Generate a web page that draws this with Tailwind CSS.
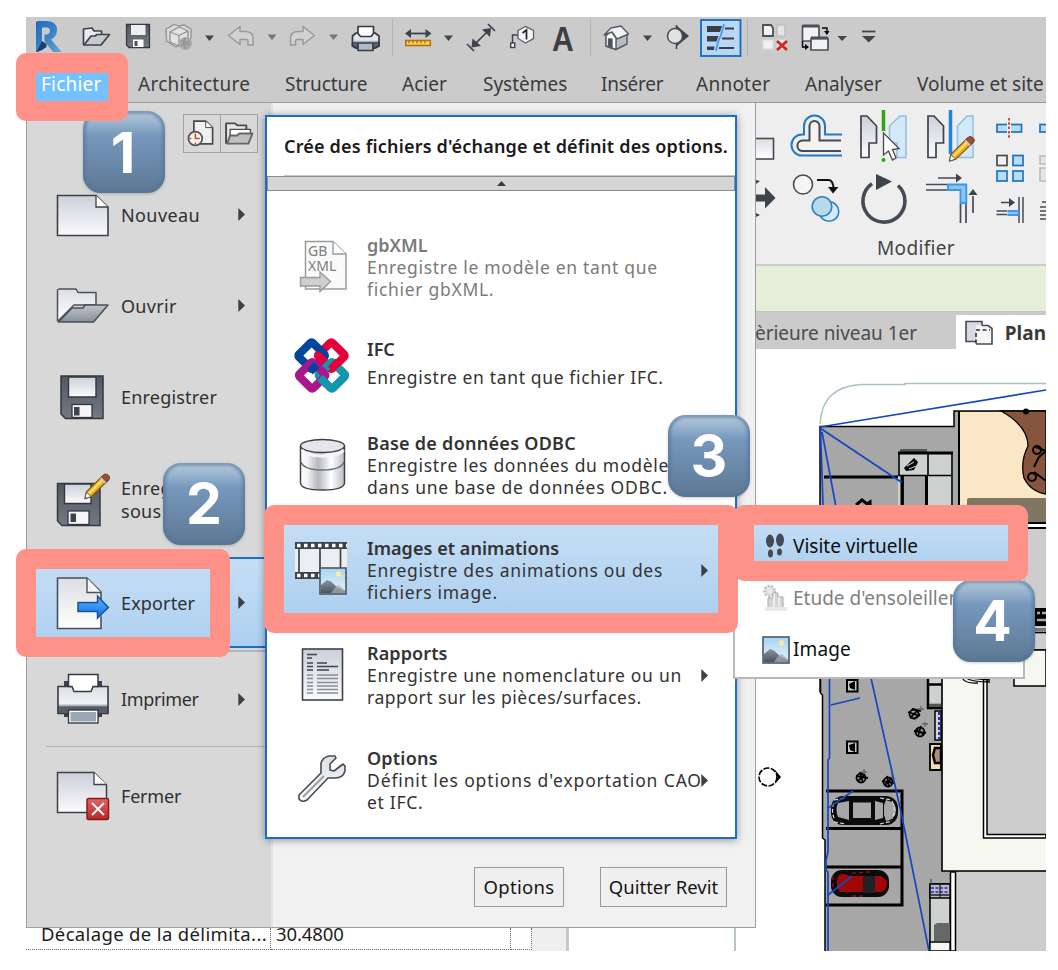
<!DOCTYPE html>
<html lang="fr">
<head>
<meta charset="utf-8">
<title>Revit – Exporter une visite virtuelle</title>
<script src="https://cdn.jsdelivr.net/npm/@tailwindcss/browser@4"></script>
</head>
<body class="relative h-[970px] w-[1058px] overflow-hidden bg-white font-['Noto_Sans',sans-serif] text-[#3b3b3b]">

<!-- shared gradients and symbols -->
<svg class="absolute size-0" aria-hidden="true">
  <defs>
    <linearGradient id="gray" x1="0" y1="0" x2="0" y2="1"><stop offset="0" stop-color="#ccd0da"/><stop offset="1" stop-color="#fbfbfc"/></linearGradient>
    <linearGradient id="paper" x1="0" y1="0" x2="0" y2="1"><stop offset="0" stop-color="#dcdee2"/><stop offset="1" stop-color="#ffffff"/></linearGradient>
    <linearGradient id="dark" x1="0" y1="0" x2="0" y2="1"><stop offset="0" stop-color="#525963"/><stop offset="1" stop-color="#737983"/></linearGradient>
    <linearGradient id="flap" x1="0" y1="0" x2="0" y2="1"><stop offset="0" stop-color="#c0c5cc"/><stop offset="1" stop-color="#87909b"/></linearGradient>
    <linearGradient id="cyl" x1="0" y1="0" x2="1" y2="0"><stop offset="0" stop-color="#fff"/><stop offset=".15" stop-color="#f4f4f5"/><stop offset=".4" stop-color="#b5b8be"/><stop offset=".7" stop-color="#fff"/><stop offset="1" stop-color="#b9bcc2"/></linearGradient>
    <linearGradient id="bluearrow" x1="0" y1="0" x2="0" y2="1"><stop offset="0" stop-color="#5db2ff"/><stop offset="1" stop-color="#0a72e8"/></linearGradient>
    <linearGradient id="sky" x1="0" y1="0" x2="0" y2="1"><stop offset="0" stop-color="#a5d4f0"/><stop offset="1" stop-color="#e9f5fb"/></linearGradient>
    <linearGradient id="hill" x1="0" y1="0" x2="0" y2="1"><stop offset="0" stop-color="#8b94a0"/><stop offset="1" stop-color="#4a5361"/></linearGradient>
    <linearGradient id="rl" x1="0" y1="0" x2="1" y2="1"><stop offset="0" stop-color="#1d6cc0"/><stop offset=".5" stop-color="#3a82c8"/><stop offset="1" stop-color="#6aa6cc"/></linearGradient>
    <linearGradient id="redx" x1="0" y1="0" x2="0" y2="1"><stop offset="0" stop-color="#e06464"/><stop offset="1" stop-color="#b82727"/></linearGradient>
    <symbol id="arrow" viewBox="0 0 7 13"><path d="M.3 0L7 6.500L.3 13Z" fill="#3f4043"/></symbol>
    <symbol id="picture" viewBox="0 0 28 28">
      <rect x="1" y="1" width="26" height="26" fill="url(#sky)" stroke="#4d5661" stroke-width="1.6"/>
      <rect x="17" y="4.500" width="5" height="5" rx="1" fill="#fbe7a0"/>
      <path d="M2 18L8 13L12 14.500L18 20L26 24V26.200H2Z" fill="url(#hill)"/>
      <path d="M12 26L17 19L20 18L26 23V26Z" fill="#a9aeb6" opacity=".7"/>
    </symbol>
    <symbol id="pencil" viewBox="0 0 28 28">
      <path d="M1 27L2.500 20L20 3L25 8L7.500 25Z" fill="#f0b21a" stroke="#8a5a12" stroke-width="1.300"/>
      <path d="M5 22L21 6" stroke="#ffe07a" stroke-width="2.200"/>
      <path d="M1 27L2.500 20.500L7.500 25Z" fill="#fff" stroke="#555" stroke-width="1"/>
      <path d="M17.500 5.500L22.500 10.500L26.800 6.500Q27 2 21.500 1.500Z" fill="#9a5230" stroke="#5e3a28" stroke-width="1"/>
      <path d="M16.500 6.500L21.500 11.500L23 10L18 5Z" fill="#c8c8c8"/>
    </symbol>
  </defs>
</svg>

<div class="ml-[26px] mt-[17px] flex h-[934px] w-[1020px] flex-col overflow-hidden">

  <!-- quick access toolbar -->
  <div class="flex h-10 bg-[#cbcbcb]">
    <svg class="h-10 w-[46px]" viewBox="26 17 46 40">
      <path d="M36 22L40 21V51L36 52Z" fill="#2b5a90"/><path d="M37 21H47Q57.500 21.500 57 30.500Q56.500 37.500 51 39.500L61.500 52H53L44.500 41V34.500H47Q50 33.500 50 30.500Q49.500 27.500 46.500 27.500H42V47L36 52V33Z" fill="url(#rl)"/><path d="M42 41L46.500 44V47Q42 51 36.500 52Z" fill="#1d3f68"/>
    </svg>
    <svg class="h-10 w-[46px]" viewBox="72 17 46 40" stroke="#3d434c" stroke-width="1.700" stroke-linejoin="round">
      <path d="M83.500 45V29L92 28L94 31H101.500V35" fill="#e9eaee"/><path d="M84 45L91 36H95L97 34.500H109.500L101 45Z" fill="#c5c9d0"/>
    </svg>
    <svg class="h-10 w-10" viewBox="118 17 40 40">
      <path d="M126.500 24.500H149.500V47.500H129L126.500 45Z" fill="url(#dark)" stroke="#353b45" stroke-width="1.300"/><rect x="131" y="25" width="14.500" height="10" fill="#eceef1"/><rect x="133" y="39.500" width="10.500" height="7.500" fill="#fff"/><rect x="134.500" y="41" width="3" height="5" fill="#4a505a"/>
    </svg>
    <svg class="h-10 w-[62px]" viewBox="158 17 62 40">
      <g fill="#d9d9d9" stroke="#929292" stroke-width="1.300" stroke-linejoin="round"><path d="M166 29L174 24.500L179 26L184 25L191 29V38L186 43L176 47L166.500 41Z"/><path d="M170 32L179 27L188 31V41L179 46L170 42Z" fill="#e2e2e2"/><path d="M170 32L179 35.500L188 31M179 35.500V46" fill="none"/></g>
      <circle cx="185.500" cy="43.500" r="6.500" fill="#a9a9a9"/><path d="M181 40q5 4 9 1M181 46q4-4 9-1M185 38q-3 6 1 11" stroke="#8a8a8a" fill="none"/>
      <path d="M205 35.500H214L209.500 41Z" fill="#444"/>
    </svg>
    <svg class="h-10 w-[62px]" viewBox="220 17 62 40">
      <path d="M228.500 35.500L240 26.500V31.500H246Q253 32 253 38V45H248V41Q248 39.500 246 39.500H240V44.500Z" fill="#d2d2d2" stroke="#9a9a9a" stroke-width="1.500" stroke-linejoin="round"/><path d="M267.500 34.500H276.500L272 40Z" fill="#777"/>
    </svg>
    <svg class="h-10 w-[62px]" viewBox="282 17 62 40">
      <path d="M314.500 35.500L303 26.500V31.500H297Q290.500 32 290.500 38V45H295.500V41Q295.500 39.500 297 39.500H303V44.500Z" fill="#d2d2d2" stroke="#9a9a9a" stroke-width="1.500" stroke-linejoin="round"/><path d="M329 34.500H338L333.500 40Z" fill="#777"/>
    </svg>
    <svg class="h-10 w-12" viewBox="344 17 48 40" stroke="#353b45" stroke-width="1.700" stroke-linejoin="round">
      <path d="M352.500 36L356 33H375L379 36V46L375 48H356L352.500 46Z" fill="#e4e6e9"/><path d="M352.500 42.500H379V46L375 48H356L352.500 46Z" fill="#5a626d"/><path d="M358 26.500H373.500V33.500L371 36.500H360.500L358 33.500Z" fill="#fff"/><rect x="358" y="43" width="15" height="7.500" fill="#a9bcc8"/><path d="M353.500 41.500H378" stroke="#aeb3ba" stroke-width="1.500"/>
    </svg>
    <svg class="h-10 w-[68px]" viewBox="392 17 68 40">
      <path d="M392.500 19V56" stroke="#b4b4b4"/><path d="M407 33.500H430" stroke="#3d434c" stroke-width="1.800"/><path d="M405 33.500L411 29V38ZM431.500 33.500L425.500 29V38Z" fill="#3d434c"/><rect x="405.800" y="40.500" width="24.500" height="5" fill="#ffd55c" stroke="#b87000" stroke-width="1.600"/><path d="M409 41v2.500M413 41v2.500M417 41v2.500M421 41v2.500M425 41v2.500" stroke="#8a5600"/><path d="M444 35.500H453L448.500 41Z" fill="#444"/>
    </svg>
    <svg class="h-10 w-[42px]" viewBox="460 17 42 40" stroke="#3d434c" stroke-width="1.700">
      <path d="M474 45L489 30M467 44L474 51M488 24L495 31"/><path d="M471.500 47.500L472.500 38.500L481 46ZM491 28L490 37L482 29.500Z" fill="#3d434c" stroke="none"/>
    </svg>
    <svg class="h-10 w-10" viewBox="502 17 40 40">
      <path d="M512.500 43V35H518" stroke="#3d434c" stroke-width="1.500" fill="none"/><rect x="510.700" y="43" width="4" height="4.500" fill="#fff" stroke="#3d434c" stroke-width="1.400"/><path d="M518 30.500L525.500 26.500L533.500 30.500V38.500L525.500 43L518 38.500Z" fill="#f4f4f5" stroke="#5b6069" stroke-width="1.300"/><path d="M522.500 33L526.500 30V39.500" stroke="#222" stroke-width="1.700" fill="none"/>
    </svg>
    <div class="flex w-12 items-center justify-start pl-[10px] pt-[2px] font-['Liberation_Sans',sans-serif] text-[35px] font-bold leading-none text-[#3d3f42]"><span class="inline-block origin-left scale-x-[0.86]">A</span></div>
    <svg class="h-10 w-[68px]" viewBox="590 17 68 40">
      <path d="M590.500 19V56" stroke="#b4b4b4"/><g stroke="#555b65" stroke-width="1.400" stroke-linejoin="round"><path d="M606 36V46L616 49.500L627 44V34L616 30Z" fill="#b5bcc8"/><path d="M606 36L611 31L616 38V49.500L606 46Z" fill="#fff"/><path d="M604 35L611 28L621 26L628.500 34L617 39L612 32Z" fill="#f1f2f4"/><path d="M608.500 39V47L612 48V39Z" fill="#4a5058"/></g><path d="M643 35.500H652L647.500 41Z" fill="#444"/>
    </svg>
    <svg class="h-10 w-[41px]" viewBox="658 17 41 40">
      <path d="M677 26L689 36L677 46Z" fill="#3d434c"/><path d="M676.500 25V49" stroke="#3d434c" stroke-width="1.500"/><circle cx="675" cy="36" r="7.500" fill="#e2e2e4" stroke="#4a5059" stroke-width="1.500"/>
    </svg>
    <svg class="h-10 w-12" viewBox="699 17 48 40">
      <rect x="701" y="20" width="39.500" height="36" fill="#b9d7f3" stroke="#1168c4" stroke-width="1.800"/><path d="M707 26H722L720 32H707ZM707 36H718.500L716.500 41.500H707ZM707 46.500H714.500L714 50H707Z" fill="#3a3f47"/><path d="M725 28.500H734M722 38.500H734M719 48H734" stroke="#3a3f47" stroke-width="1.800"/><path d="M724 24L722.500 30L720.500 36L718 42L716 51" stroke="#3f9bff" stroke-width="1.800" fill="none"/>
    </svg>
    <svg class="h-10 w-[47px]" viewBox="747 17 47 40">
      <path d="M747.500 19V56" stroke="#b4b4b4"/><path d="M763 25H771L773 28V36H763Z" fill="#f2f2f3" stroke="#4a505a" stroke-width="1.800"/><g fill="#e3e4e6" stroke="#b5b8be" stroke-width="1.200"><path d="M777 25H785V36H777Z"/><path d="M763 40H773V49H763Z" fill="#f0f0f1" stroke="#dcdcde"/><path d="M777 40H785V49H777Z" fill="#f0f0f1" stroke="#dcdcde"/></g><path d="M777 41L787 50M787 41L777 50" stroke="#cf2a20" stroke-width="3"/>
    </svg>
    <svg class="h-10 w-[58px]" viewBox="794 17 58 40">
      <g fill="#f2f2f3" stroke="#4a505a" stroke-width="1.700"><path d="M802.500 26H819V41H802.500Z"/><path d="M802.500 26H819" stroke-width="3"/><path d="M811 38.500H828V50H811Z"/><path d="M811 38H828" stroke-width="3"/></g><path d="M822 28H827V34M802.500 41V47H807" stroke="#000" stroke-width="1.400" fill="none"/><path d="M824 31H829.500L827 35ZM805 44V50L809 47Z"/><path d="M837.500 36H847L842 41Z" fill="#444"/>
    </svg>
    <svg class="h-10 w-8" viewBox="852 17 32 40"><path d="M862 31.500H875.500" stroke="#444" stroke-width="1.800"/><path d="M862 36H875.500L868.700 42.500Z" fill="#444"/></svg>
  </div>

  <!-- ribbon tabs -->
  <div class="flex h-[46px] items-start border-b border-[#9c9c9c] bg-[#cbcbcb] pl-[10px] pt-[13px] text-[19px] leading-7 whitespace-nowrap">
    <span class="mr-[30px] h-8 w-[72px] bg-[#73c2ff] pl-[5px] text-white tracking-[0.2px]">Fichier</span>
    <span class="w-[147px] tracking-[0.28px]">Architecture</span>
    <span class="w-[117px] tracking-[-0.05px]">Structure</span>
    <span class="w-[81px]">Acier</span>
    <span class="w-[118px]">Systèmes</span>
    <span class="w-[95px] tracking-[-0.25px]">Insérer</span>
    <span class="w-[109px] tracking-[0.25px]">Annoter</span>
    <span class="w-[112px] tracking-[0.02px]">Analyser</span>
    <span>Volume et site</span>
  </div>

  <div class="flex grow">
    <!-- left side: application menu over the properties palette -->
    <div class="flex w-[730px] flex-col">
      <div class="relative flex h-[825px] border-b-[1.500px] border-l-[1.500px] border-r-[1.500px] border-[#9d9f9e] bg-[#f1f1f1]">
        <div class="flex w-[246px] flex-col border-r-2 border-[#e6e6e6] bg-[#d8d8d8] text-[18px] text-[#303030] leading-[22px] tracking-[0.3px]">
          <div class="flex h-[66px] pl-[156px] pt-[11px]">
            <div class="flex h-[39px] w-[75px] border-[1.500px] border-[#a2a2a2]">
              <svg class="h-full w-1/2 border-r border-[#a2a2a2]" viewBox="184 117 36 36"><path d="M194 122.500H206L213 129V145.500H194Z" fill="#f0f0f1" stroke="#4a4a4a" stroke-width="1.700"/><path d="M206 122.500V129H213" fill="#fff" stroke="#4a4a4a"/><circle cx="195.500" cy="140" r="7" fill="#f5f5f5" stroke="#555" stroke-width="1.800"/><path d="M195.500 135V140H200M189.500 140H191.500M195.500 146V144" stroke="#e0431c" stroke-width="1.500" fill="none"/></svg>
              <svg class="h-full w-1/2" viewBox="220 117 36 36"><g stroke="#4a4a4a" stroke-width="1.900" stroke-linejoin="round"><path d="M225 145V125H234L236 127H245V133" fill="#e6e6e6"/><path d="M229 131H249V138H229Z" fill="#fff" stroke-width="1.300"/><path d="M226 145L229 137H236L238 135H251L247 145Z" fill="#bfbfbf" stroke="#666"/></g></svg>
            </div>
          </div>
          <div class="flex h-[91px] items-center pl-[29px]">
            <svg class="mr-[11px] h-[44px] w-[54px]" viewBox="56 193 54 44"><path d="M57.500 195.500H96L108 207V235.500H57.500Z" fill="url(#gray)" stroke="#3d4046" stroke-width="1.600"/><path d="M96 195.500V207H108" fill="#fff" stroke="#3d4046" stroke-width="1.300"/></svg>
            <span class="w-[117px] tracking-[0.4px]">Nouveau</span><svg class="h-[13px] w-[7px]"><use href="#arrow"/></svg>
          </div>
          <div class="flex h-[91px] items-center pl-[29px]">
            <svg class="mr-[11px] h-[44px] w-[54px]" viewBox="56 285 54 44"><g stroke="#4a505a" stroke-width="1.500" stroke-linejoin="round"><path d="M57.500 322V291L59 290H76L78 293.500H96V306H74L58 322Z" fill="url(#paper)"/><path d="M58.500 323L72 309H83L85 306H108L93.500 323Z" fill="url(#flap)"/></g></svg>
            <span class="w-[117px]">Ouvrir</span><svg class="h-[13px] w-[7px]"><use href="#arrow"/></svg>
          </div>
          <div class="flex h-[92px] items-center pl-[29px]">
            <svg class="mr-[11px] h-[46px] w-[54px]" viewBox="56 374 54 46"><path d="M61 376H103V418.500H65.500L61 414Z" fill="url(#dark)" stroke="#33383f" stroke-width="1.500"/><path d="M68.500 377H96V397H68.500Z" fill="url(#gray)" stroke="#33383f" stroke-width="1.400"/><rect x="72" y="404.500" width="20" height="13" fill="#f5f5f6" stroke="#33383f" stroke-width="1.300"/><rect x="74" y="407" width="5.500" height="8.500" fill="#3d434c"/></svg>
            <span class="tracking-[0.2px]">Enregistrer</span>
          </div>
          <div class="flex h-[114px] items-center pl-[29px]">
            <svg class="mr-[11px] h-[56px] w-[54px]" viewBox="56 470 54 56"><path d="M57.500 481.500H100V523.500H62L57.500 519Z" fill="url(#dark)" stroke="#33383f" stroke-width="1.500"/><path d="M64.500 482H91V501.500H64.500Z" fill="url(#gray)" stroke="#33383f" stroke-width="1.400"/><rect x="68" y="509" width="21" height="13.500" fill="#f5f5f6" stroke="#33383f" stroke-width="1.300"/><rect x="70.500" y="511.500" width="5.500" height="8.500" fill="#3d434c"/><use href="#pencil" x="84" y="470" width="27" height="28"/></svg>
            <span class="leading-[23px]">Enregistrer<br>sous</span>
          </div>
          <div class="flex h-[91px] items-center border-y-2 border-[#1b6ec4] bg-linear-to-b from-[#c6def5] to-[#add0f0] pl-[29px]">
            <svg class="mr-[11px] h-[56px] w-[54px]" viewBox="56 573 54 56"><path d="M57.500 576H87L101 590V626.500H57.500Z" fill="url(#paper)" stroke="#4a505a" stroke-width="1.600"/><path d="M87 576V590.500H101" fill="#f6f6f6" stroke="#4a505a" stroke-width="1.400"/><path d="M76 599H96V592L110 605.500L96 619V611H76Z" fill="#fff" opacity=".6"/><path d="M78 600.500H97.500V594L108.500 605.500L97.500 616V609.500H78Z" fill="url(#bluearrow)" stroke="#174f8c" stroke-width="1.500"/></svg>
            <span class="w-[117px] tracking-[0.15px]">Exporter</span><svg class="h-[13px] w-[7px]"><use href="#arrow"/></svg>
          </div>
          <div class="ml-[19px] mt-[2px] h-[1.500px] bg-[#b5b5b5]"></div>
          <div class="flex h-[94px] items-center pl-[29px] pt-px">
            <svg class="mr-[11px] h-[54px] w-[54px]" viewBox="56 672 54 54"><path d="M64 688V681H102V688ZM64 710H102V717H64Z" fill="#3a4048"/><path d="M58 686.500H108V713.500H58Z" fill="url(#paper)" stroke="#353b45" stroke-width="1.600"/><path d="M58 706.500H108V713.500H58Z" fill="#555e69" stroke="#353b45"/><path d="M68.500 674.500H98V686.500H93L91 691.500H74L72 686.500H68.500Z" fill="#fff" stroke="#353b45" stroke-width="1.500"/><path d="M59 705.500H107" stroke="#aeb3ba" stroke-width="2"/><rect x="69.500" y="711" width="27.500" height="11.500" fill="#9aa9b5" stroke="#fff" stroke-width="2"/><rect x="68.500" y="710" width="29.500" height="13" fill="none" stroke="#353b45" stroke-width="1.400"/></svg>
            <span class="w-[117px] tracking-[-0.35px]">Imprimer</span><svg class="h-[13px] w-[7px]"><use href="#arrow"/></svg>
          </div>
          <div class="ml-[19px] h-[1.500px] bg-[#b5b5b5]"></div>
          <div class="flex h-[97px] items-center pl-[29px]">
            <svg class="mr-[11px] h-[52px] w-[54px]" viewBox="56 770 54 52"><path d="M57.500 772.500H94L106.500 785V812.500H57.500Z" fill="url(#gray)" stroke="#3d4046" stroke-width="1.500"/><path d="M94 772.500V784.500H106.500" fill="#fff" stroke="#3d4046" stroke-width="1.300"/><rect x="87" y="798.500" width="21.500" height="21" rx="1.500" fill="url(#redx)" stroke="#8d1a1a" stroke-width="1.500"/><path d="M92 803L104 815M104 803L92 815" stroke="#fff" stroke-width="1.800"/></svg>
            <span class="tracking-[-0.2px]">Fermer</span>
          </div>
        </div>

        <!-- footer buttons -->
        <div class="flex grow items-end justify-end gap-[36px] pb-[20px] pr-[28px] text-[18.500px] text-[#151515]">
          <div class="flex h-[40px] w-[90px] items-center justify-center border-[1.500px] border-[#9a9a9a] bg-[#efefef] pb-[2px] pt-[2px] tracking-[0.3px]">Options</div>
          <div class="flex h-[40px] w-[127px] items-center justify-center border-[1.500px] border-[#9a9a9a] bg-[#efefef] pb-[2px] pt-[2px] whitespace-nowrap">Quitter Revit</div>
        </div>

        <!-- export list panel -->
        <div class="absolute left-[238px] top-[12px] flex h-[724px] w-[472px] flex-col border-2 border-[#1b6ec4] bg-white shadow-[0_1px_8px_rgba(0,0,0,0.4)]">
          <div class="ml-[17px] flex h-[59px] items-center border-b border-[#c4c4c4] text-[18px] font-semibold tracking-[0.18px] text-[#1a1a1a] whitespace-nowrap">Crée des fichiers d'échange et définit des options.</div>
          <div class="flex h-[15px] items-center justify-center border-[1.500px] border-[#8c8c8c] bg-[#d6d6d6]"><svg class="h-[5px] w-[9px]" viewBox="0 0 9 5"><path d="M0 5L4.500 0L9 5Z" fill="#3a3a3a"/></svg></div>
          <div class="mt-[23.500px] flex flex-col text-[17.500px] leading-[22.300px] tracking-[0.7px] text-[#333] whitespace-nowrap">
            <div class="flex h-[105px] items-center pl-[26px] text-[#7b7b7b]">
              <svg class="mr-[19px] h-[56px] w-[55px]" viewBox="293 239 55 56"><path d="M305.500 241.500H333L346 254V289H305.500Z" fill="#fafafa" stroke="#9b9b9b" stroke-width="1.500"/><path d="M333 241.500V254H346" fill="#fff" stroke="#9b9b9b" stroke-width="1.400"/><text x="308" y="256" class="tracking-[0px]" font-size="14" fill="#7d7d7d">GB</text><text x="308" y="270.500" class="tracking-[0px]" font-size="14" fill="#7d7d7d">XML</text><path d="M300.500 277.500H320V272L330.500 281.500L320 291.500V286H300.500Z" fill="#cfcfcf" stroke="#9b9b9b" stroke-width="1.400"/></svg>
              <div><div class="text-[18px] font-semibold tracking-normal">gbXML</div>Enregistre le modèle en tant que<br>fichier gbXML.</div>
            </div>
            <div class="flex h-[93px] items-center pl-[26px]">
              <svg class="mb-[2px] mr-[17px] h-[57px] w-[57px]" viewBox="295.500 339 52 52" fill="none" stroke-width="7.400" stroke-linejoin="round">
                <rect x="-9" y="-9" width="18" height="18" rx="1.500" transform="translate(330.500 356) rotate(45)" stroke="#e4003c"/>
                <rect x="-9" y="-9" width="18" height="18" rx="1.500" transform="translate(312.500 356) rotate(45)" stroke="#00479b"/>
                <path d="M318.500 356L325 362.500" stroke="#e4003c" stroke-linecap="round"/>
                <rect x="-9" y="-9" width="18" height="18" rx="1.500" transform="translate(331 374) rotate(45)" stroke="#1397ad"/>
                <rect x="-9" y="-9" width="18" height="18" rx="1.500" transform="translate(313 374) rotate(45)" stroke="#a9178a"/>
                <path d="M326 382L320 376" stroke="#1397ad"/>
                <path d="M317 364.500L311 370.500" stroke="#00479b"/>
                <path d="M330 368.500L337 361.500" stroke="#e4003c"/>
              </svg>
              <div class="relative -top-[3px]"><div class="mb-[5px] text-[18px] font-semibold tracking-normal">IFC</div><span class="tracking-[0.64px]">Enregistre en tant que fichier IFC.</span></div>
            </div>
            <div class="flex h-[105px] items-center pl-[26px]">
              <svg class="mr-[19px] h-[56px] w-[55px]" viewBox="293 437 55 56"><path d="M300.500 447V483Q301 490 322.500 490Q344 490 344.500 483V447Z" fill="url(#cyl)" stroke="#3d4046" stroke-width="1.500"/><ellipse cx="322.500" cy="446" rx="22" ry="6.500" fill="#e5e6e9" stroke="#3d4046" stroke-width="1.500"/><path d="M302 450Q306 456 322 456Q339 456 343.500 450" stroke="#f6f6f7" stroke-width="3" fill="none"/><path d="M301 462Q304 470 322.500 470Q341 470 344 462" fill="none" stroke="#6a6e76" stroke-width="1.500"/></svg>
              <div><div class="text-[18px] font-semibold tracking-[0.27px]">Base de données ODBC</div>Enregistre les données du modèle<br><span class="tracking-[0.76px]">dans une base de données ODBC.</span></div>
            </div>
            <div class="flex h-[105px] items-center bg-linear-to-b from-[#c6def5] to-[#abcfef] pl-[26px]">
              <svg class="mr-[19px] h-[58px] w-[55px]" viewBox="293 541 55 58"><path d="M295 542H347V579H295Z" fill="#3c434d"/><path d="M295 549H347V572H295Z" fill="#eceef2"/><path d="M299 549V572M320 549V572M340.500 549V572" stroke="#3c434d" stroke-width="1.700"/><path d="M297 545.500H347M297 575.500H347" stroke="#fff" stroke-width="3.500" stroke-dasharray="3.500 3.500"/><use href="#picture" x="319" y="567" width="28" height="28"/></svg>
              <div class="w-[334px]"><div class="text-[18px] font-semibold tracking-[0.05px]">Images et animations</div>Enregistre des animations ou des<br>fichiers image.</div><svg class="h-[13px] w-[7px]"><use href="#arrow"/></svg>
            </div>
            <div class="flex h-[105px] items-center pl-[26px]">
              <svg class="mr-[19px] h-[56px] w-[55px]" viewBox="293 646 55 56"><rect x="302.500" y="648" width="40" height="51" fill="url(#gray)" stroke="#3d434c" stroke-width="1.600"/><path d="M307 653.500H317M307 657H312M307 662H313M317 662H327M307 665.500H313M317 665.500H338M307 669H313M317 669H329" stroke="#3d434c" stroke-width="1.500"/><path d="M307 674H313M317 674H338M307 677.500H313M317 677.500H338M307 681.500H313M317 681.500H338M307 685H313M317 685H338M307 688.500H313M317 688.500H338M307 692H313M317 692H338" stroke="#888d96" stroke-width="1.300"/></svg>
              <div class="w-[334px]"><div class="text-[18px] font-semibold tracking-[0.1px]">Rapports</div>Enregistre une nomenclature ou un<br><span class="tracking-[0.55px]">rapport sur les pièces/surfaces.</span></div><svg class="h-[13px] w-[7px]"><use href="#arrow"/></svg>
            </div>
            <div class="flex h-[105px] items-center pl-[26px]">
              <svg class="mr-[19px] h-[56px] w-[55px]" viewBox="293 751 55 56"><path d="M299 794L321 772V762Q323 756 329 755H335L336 757L330 763V769L334 770L343 763L345 765V770Q343 777 335 777H328L307 799Q302 802 299 798Z" fill="url(#paper)" stroke="#454b55" stroke-width="1.600" stroke-linejoin="round"/><path d="M303 796L324 775" stroke="#9aa0aa" stroke-width="2"/></svg>
              <div class="w-[334px]"><div class="text-[18px] font-semibold tracking-[0.2px]">Options</div><span class="tracking-[0.87px]">Définit les options d'exportation CAO</span><br>et IFC.</div><svg class="h-[13px] w-[7px]"><use href="#arrow"/></svg>
            </div>
          </div>
        </div>
      </div>

      <!-- properties palette row -->
      <div class="flex h-[23px] overflow-hidden text-[18.500px] leading-[11px] text-[#1c1c1c] whitespace-nowrap">
        <div class="flex h-[22px] w-[245px] border-b border-r border-dotted border-[#666] pl-[15px] tracking-[0.35px]">Décalage de la délimita...</div>
        <div class="h-[22px] w-[240px] border-b border-r border-dotted border-[#666] pl-[5px] tracking-[-0.1px]">30.4800</div>
        <div class="h-[22px] w-[21px] border-b border-r border-dotted border-[#666]"></div>
        <div class="w-[34px] bg-[#efefef]"></div>
        <div class="w-[3px] bg-[#c9c9c9]"></div>
        <div class="ml-[165px] w-[2px] bg-[#b3c9bf]"></div>
      </div>
    </div>

    <!-- right side: ribbon, option bar, view tabs, plan -->
    <div class="flex w-[290px] flex-col">
      <div class="flex h-[163px] flex-col border-b-2 border-[#cbcbcb] bg-[#eeeeee]">
        <div class="grid h-[129px] grid-cols-[29px_63px_66px_72px_60px] grid-rows-[66px_63px]">
          <svg class="h-[66px] w-[29px]" viewBox="756 103 29 66"><rect x="740" y="138.500" width="33.500" height="20.500" fill="url(#paper)" stroke="#454b55" stroke-width="1.600"/></svg>
          <svg class="h-[66px] w-[63px]" viewBox="785 103 63 66" fill="none"><path d="M842 134.500H825V126A10.500 10.500 0 0 0 804 126V134.500H802A10.300 10.300 0 0 0 802 155.500H842" stroke="#2379c7" stroke-width="2"/><path d="M841 140.500H819.500V126A5 5 0 0 0 809.500 126V140.500H802A5.300 5.300 0 0 0 802 151H841" stroke="#454b55" stroke-width="2" fill="#f3f3f4"/></svg>
          <svg class="h-[66px] w-[66px]" viewBox="848 103 66 66"><path d="M861 116H867L876.500 126V143H869V157.500H861Z" fill="url(#gray)" stroke="#3d434c" stroke-width="1.700"/><path d="M906 116H900L889.500 126V143H897V157.500H906Z" fill="#d3e9f5" stroke="#8fc0e2" stroke-width="1.500"/><path d="M883.500 110V131" stroke="#36a01c" stroke-width="3.500"/><circle cx="883.500" cy="160" r="2" fill="#36a01c"/><path d="M883.500 133V155L888.500 151L892.500 160L896 158L892.500 149.500L899 148.500Z" fill="#fff" stroke="#4a4a4a" stroke-width="1.300"/></svg>
          <svg class="h-[66px] w-[72px]" viewBox="914 103 72 66"><path d="M928 116H934L943.500 126V143H936V157.500H928Z" fill="url(#gray)" stroke="#3d434c" stroke-width="1.700"/><path d="M973 116H967L957.500 126V157.500H973Z" fill="#d3e9f5" stroke="#8fc0e2" stroke-width="1.500"/><path d="M950.500 110V154" stroke="#1e83e8" stroke-width="3.500"/><use href="#pencil" x="948.500" y="135" width="27" height="27"/></svg>
          <svg class="row-span-2 h-[129px] w-[60px]" viewBox="986 103 60 129"><g stroke="#1b74bb" stroke-width="1.700" fill="#b9dcf0"><rect x="997" y="124.500" width="24.500" height="7.500"/><rect x="1040" y="124.500" width="12" height="7.500"/><rect x="1013" y="155.500" width="10" height="10"/><rect x="997" y="171" width="10" height="10"/><rect x="1013" y="171" width="10" height="10"/></g><path d="M1009 118V138" stroke="#eee" stroke-width="4"/><path d="M1009 118V138" stroke="#cf3a2c" stroke-width="1.800" stroke-dasharray="2.500 1.800"/><rect x="997" y="155.500" width="10" height="10" fill="#f0f0f1" stroke="#454b55" stroke-width="1.700"/><path d="M1040 156H1050V164H1040ZM1040 168H1050V181H1040Z" fill="#e4e4e4" stroke="#b9b9b9" stroke-width="1.500"/><path d="M1001 202.500H1010M996.500 211H1007M996.500 214.500H1007M1019 197V223M1023 197V223" stroke="#454b55" stroke-width="1.500"/><path d="M1009 198L1015 202.500L1009 207Z" fill="#3d434c"/><path d="M1007.500 211H1018.500V215H1007.500" stroke="#3f97ec" stroke-width="1.800" fill="#8cc4f7"/><path d="M1040 207H1046M1040 211H1046M1040 215H1046M1040 219H1046M1042 202H1046" stroke="#454b55" stroke-width="1.500"/></svg>
          <svg class="h-[63px] w-[29px]" viewBox="756 169 29 63"><path d="M756 194.500H765V187L775.500 198L765 208.500V201.500H756Z" fill="#3d434c"/><path d="M756 180L760 181L756 184ZM756 213L760 215L756 217Z" fill="#3d434c"/></svg>
          <svg class="h-[63px] w-[63px]" viewBox="785 169 63 63"><circle cx="803" cy="184.500" r="9.500" fill="#f5f5f6" stroke="#454b55" stroke-width="1.600"/><path d="M817 180H829Q833.500 181 833.500 189" stroke="#111" stroke-width="2" fill="none"/><path d="M828 187H838.500L833 193.500Z" fill="#111"/><circle cx="829" cy="211.500" r="9.800" fill="#d5eaf6" stroke="#2e82c5" stroke-width="1.600"/><circle cx="822" cy="206.500" r="9.800" fill="#b8d9ea" stroke="#2e82c5" stroke-width="1.600"/></svg>
          <svg class="h-[63px] w-[66px]" viewBox="848 169 66 63"><path d="M872 183.800A21 21 0 1 0 898 185.500" fill="none" stroke="#454b55" stroke-width="3.600"/><path d="M876 174L892 181.500L876 190Z" fill="#3d434c"/></svg>
          <svg class="h-[63px] w-[72px]" viewBox="914 169 72 63"><path d="M938 178H957M973 213V196M926 184.500H947M926 190H947M960.500 204V223M966 204V223" stroke="#454b55" stroke-width="1.700"/><path d="M956 173.500L962 178L956 182.500ZM968.500 195L973 189L977.500 195Z" fill="#3d434c"/><path d="M948 184.500H966.300V203H960.500V190H948Z" fill="#8cc4f7" stroke="#3f97ec" stroke-width="1.900"/></svg>
        </div>
        <div class="flex grow items-center pt-px pl-[121px] text-[19px] tracking-[0.33px] text-[#444]">Modifier</div>
      </div>
      <div class="h-[45px] bg-[#e5eed8]"></div>
      <div class="flex h-[38px] border-t border-[#c4c4c4] bg-[#cbcbcb] text-[19px] whitespace-nowrap">
        <div class="flex w-[200px] items-center overflow-hidden pt-[6px] tracking-[-0.05px] text-[#4c4c4c]"><span class="-ml-[1px]">èrieure niveau 1er</span></div>
        <div class="mt-[3px] flex grow items-center bg-white pl-[8px] font-bold">
          <svg class="h-[28px] w-[30px] shrink-0" viewBox="964 317.500 30 28"><path d="M966 321H982V341H966Z" fill="#d7dae0" stroke="#454b55" stroke-width="1.600"/><path d="M976 329V325H988L992 328V343.500H976Z" fill="#f5f5f6"/><path d="M976 343.500H992V328L988 325H982" fill="none" stroke="#454b55" stroke-width="1.600"/><path d="M976 343V330M976 329.500H990" stroke="#333" stroke-width="1.600" stroke-dasharray="4 2.500"/></svg>
          <span class="ml-[11px] pt-[2px]">Plan</span>
        </div>
      </div>
      <!-- floor plan -->
      <svg class="h-[602px] w-[290px] bg-white" viewBox="756 349 290 602" stroke-width="1.300">
        <path d="M820 424Q822 386 862 384.500H905V383.500H1046" fill="none" stroke="#a9c4b7" stroke-width="1.400"/>
        <path d="M820 426H954V411H1046V951H825V839L822.500 838V694L820 692Z" fill="#a7a7a7"/>
        <path d="M820 692V426.500H954V411H1046M820.500 678V693L822.500 695V838L825 840V951" fill="none" stroke="#000" stroke-width="1.500"/>
        <!-- upper room -->
        <path d="M960 412H1046V522H960Z" fill="#fae7c5"/><path d="M959 411V523H1046" fill="none" stroke="#000" stroke-width="2"/>
        <path d="M1001 411Q1028 426 1028 446Q1020 462 1024 478Q1031 492 1046 494V411Z" fill="#87543e" stroke="#000"/>
        <path d="M967 522V500Q967 498 970 498H1046V522Z" fill="#7f7763"/>
        <circle cx="1026" cy="411.500" r="3"/><circle cx="1037" cy="450" r="4" fill="none" stroke="#000" stroke-width="2"/><circle cx="1032" cy="477" r="4" fill="none" stroke="#000" stroke-width="2"/><path d="M1036 447L1046 451L1039 457L1034 467M1034 472L1046 481" stroke="#000" stroke-width="2" fill="none"/>
        <!-- bathroom block -->
        <path d="M898 453H953V520H898Z" fill="#cdd1d0"/><path d="M903 476H926V520H903Z" fill="#a7a7a7"/>
        <path d="M900 449H927V453H900Z" fill="#555"/><path d="M898 453H953M824 477H898" stroke="#000" stroke-width="3"/><path d="M899 453V475.500H952M928 453V476M898 475L903 476V520M952 453V520" fill="none" stroke="#000" stroke-width="1.600"/><path d="M926.500 476V520M902 476V520" stroke="#000" stroke-width="3"/>
        <path d="M904 468L914 458L918 462L914 470L906 471Z"/><path d="M907 466L914 462M909 469L916 466" stroke="#bbb"/><path d="M856 505L862 500L867 504L870 502V507" fill="none" stroke="#000" stroke-width="3"/>
        <!-- middle wall and corridor -->
        <path d="M959 523H1046V680H959Z" fill="#cdcdcd"/><path d="M959 524H1046V527H959Z" fill="#fff"/><path d="M1020 523H1046M1020 528H1046" stroke="#000" stroke-width="2"/>
        <path d="M1030 608H1046V626H1030Z"/><path d="M1037 613H1040M1042 613H1046M1037 620H1046" stroke="#aaa" stroke-width="2.500"/><path d="M1030 629.500H1046" stroke="#777" stroke-width="3"/><path d="M1030 632.500H1046" stroke="#000" stroke-width="1.600"/><path d="M1030 650H1046" stroke="#333" stroke-width="2"/>
        <!-- cream walls -->
        <path d="M942 676H1046V871H942Z" fill="#f6f7ee"/><path d="M986 670H1046V837H984V670Z" fill="#cdcdcd"/><path d="M1014 650H1046V686H1014Z" fill="#f6f7ee" stroke="#000" stroke-width="1.500"/>
        <path d="M983.500 678V838H1046V834.500H987V678Z" fill="#fff" stroke="#000" stroke-width="1.500"/><path d="M942 678V871H1046" fill="none" stroke="#000" stroke-width="1.600"/>
        <path d="M962 678Q966 684 978 683M966 678Q972 682 990 682M970 678L990 680" fill="none" stroke="#000"/>
        <!-- lower room -->
        <path d="M956 872H1046V951H956Z" fill="#cdcdcd"/><path d="M950.500 872H955.500V951H950.500Z" fill="#fff" stroke="#000" stroke-width="1.500"/><path d="M930 884H950V951H930Z" fill="#cdd1d0" stroke="#000" stroke-width="1.500"/><path d="M930 942H950V951H930Z" fill="#f6f7ee" stroke="#000"/><path d="M934 925L937 923H950V941H934Z" fill="#666867"/><path d="M930 884H950V898H930Z" fill="#b9b9c4" stroke="#000" stroke-width="1.500"/><path d="M931 888H949M931 892H949" stroke="#2a2ad0" stroke-dasharray="3 1.500"/><path d="M940 885V898M931 895H949" stroke="#222"/><path d="M931 879V884" stroke="#555"/>
        <!-- fixtures along the wall -->
        <path d="M929 678H941V703H929Z" fill="#cdd1d0"/><path d="M928 678V708H942M929 684.500H942" stroke="#000" stroke-width="2.500" fill="none"/><path d="M929 704H941V707H929Z" fill="#555"/><path d="M935 711H941V740H935Z" fill="#d0d4e0" stroke="#000" stroke-width="1.500"/><path d="M939 712V740" stroke="#2a2ad0" stroke-width="2" stroke-dasharray="3 2"/><path d="M930 744H941V770H930Z" fill="#f0ddb0" stroke="#000" stroke-width="1.800"/><path d="M941 748H935L933 755L935 763H941Z" fill="#b58d76" stroke="#000" stroke-width="2.500"/>
        <!-- seats -->
        <g fill="#c8c8c8" stroke="#000" stroke-width="2"><rect x="847" y="680" width="10.500" height="11.500"/><rect x="847" y="741.500" width="10.500" height="11.500"/></g><path d="M849 684L855 681V690L850 688ZM849 745L855 743V752L850 750Z"/>
        <g fill="none" stroke="#000" stroke-width="1.800"><circle cx="914" cy="714" r="4.500"/><path d="M908 712L920 716M912 709L921 711M914 719L920 714M910 718L918 710"/><circle cx="920" cy="732" r="4.500"/><path d="M914 731L926 733M918 736L921 726M916 729L924 735"/><circle cx="861" cy="778" r="4.500"/><path d="M856 776L868 778M860 772L863 783M858 781L865 774"/><circle cx="888" cy="782" r="4.500"/><path d="M882 781L894 783M887 776L889 787M885 785L892 778"/></g>
        <path d="M921 706V711M918 709H924M925 722V727M922 724H928M864 769V774M861 772H867M892 773V778" stroke="#666"/>
        <!-- parking -->
        <path d="M826 791H902V905H826M826 828.500H902M826 867H902" fill="none" stroke="#000" stroke-width="3"/>
        <rect x="831" y="796" width="67" height="29" rx="12" fill="#0a0a0a"/><g fill="#a7a7a7"><path d="M838 803L849 801V820L838 817Q835 810 838 803Z"/><rect x="853" y="802.500" width="18" height="15.500"/><path d="M875 801L883 803V818L875 820Z"/><path d="M886 800Q896 802 896 810Q896 819 886 821L884 815V805Z"/></g><path d="M834 803Q831 810 834 818M892 801Q897 810 892 819M834 800L846 798M834 822L846 824M880 798L892 800M880 824L892 821" stroke="#ddd" stroke-width="1.200" fill="none" stroke-dasharray="4 2"/>
        <rect x="831" y="870" width="58" height="27" rx="11" fill="#0a0a0a"/><path d="M838 876Q842 872 850 876H864V892H840Q835 886 838 876Z" fill="#a00808"/><path d="M875 876H881Q887 879 887 884Q887 890 881 892H875Z" fill="#a00808"/><path d="M863 876H875V893H863Z" fill="#222"/><path d="M852 873L870 872M852 896H864M833 876V890" stroke="#a00808" stroke-dasharray="4 3" fill="none"/>
        <!-- section lines -->
        <g stroke="#1447c4" stroke-width="1.700" fill="none"><path d="M820 427L1046 390"/><path d="M820 428L901 482M896 479L902 482" /><path d="M820.500 430L823 505M822 432L836 507"/><path d="M829.500 678V758L828 760V852L826 860V870L828 872V951"/><path d="M871 678L901 812L929 951"/><path d="M831 705L860 698M828 808L853 791M828 895L852 876"/></g>
        <circle cx="768" cy="777" r="9" fill="#fff" stroke="#000" stroke-width="1.700" stroke-dasharray="6 1.500"/><path d="M775 770L781 777L775 784L777.500 777Z"/>
      </svg>
    </div>
  </div>
</div>

<!-- image submenu -->
<div class="absolute left-[733px] top-[515px] flex h-[164px] w-[292px] flex-col border-2 border-[#b8b8c0] bg-white pt-[2px] text-[19px] text-[#0e0e0e] whitespace-nowrap">
  <div class="flex h-[53px] items-center bg-linear-to-b from-[#c6def5] to-[#abcfef] pl-[27px]">
    <svg class="mr-[3px] h-[28px] w-[28px]" viewBox="762 532 28 28"><g fill="#454b53"><ellipse cx="770" cy="541" rx="4" ry="6.500"/><ellipse cx="770.500" cy="553.500" rx="2.500" ry="4"/><ellipse cx="780" cy="540" rx="4" ry="6.500"/><ellipse cx="779.500" cy="552" rx="2.500" ry="3.500"/></g></svg>
    <span class="pt-px">Visite virtuelle</span>
  </div>
  <div class="flex h-[52px] items-center pl-[27px] text-[#808080]">
    <svg class="mr-[3px] h-[28px] w-[28px] shrink-0" viewBox="762 584 28 28"><circle cx="769.500" cy="591" r="5" fill="#e6e6e6" stroke="#c2c2c2" stroke-width="3" stroke-dasharray="2 1.500"/><path d="M768 598H773V593H778V597H783V608H768Z" fill="#d6d6d6" stroke="#a9a9a9"/><path d="M774 593V608M779 597V608" stroke="#fff"/><path d="M765 607H787V611H765Z" fill="#e9e9e9"/></svg>
    Etude d'ensoleillement
  </div>
  <div class="flex h-[51px] items-center pl-[27px] tracking-[0.1px]">
    <svg class="mr-[3px] h-[28px] w-[28px] shrink-0"><use href="#picture"/></svg>
    Image
  </div>
</div>

<!-- numbered step badges -->
<div class="absolute left-[83px] top-[111px] flex size-[82px] items-center justify-center rounded-[18px] bg-linear-to-b from-[#b8cddd] via-[#7698bd] via-30% to-[#5d7893] font-['Inter',sans-serif] text-[57px] font-bold leading-none text-white shadow-[inset_0_0_3px_3px_#55759a99,0_1px_3px_#0003]"><span class="-ml-[2px]">1</span></div>
<div class="absolute left-[163px] top-[463px] flex size-[82px] items-center justify-center rounded-[18px] bg-linear-to-b from-[#b8cddd] via-[#7698bd] via-30% to-[#5d7893] pb-[2px] font-['Inter',sans-serif] text-[57px] font-bold leading-none text-white shadow-[inset_0_0_3px_3px_#55759a99,0_1px_3px_#0003]">2</div>
<div class="absolute left-[668px] top-[415px] flex size-[82px] items-center justify-center rounded-[18px] bg-linear-to-b from-[#b8cddd] via-[#7698bd] via-30% to-[#5d7893] pb-[2px] font-['Inter',sans-serif] text-[57px] font-bold leading-none text-white shadow-[inset_0_0_3px_3px_#55759a99,0_1px_3px_#0003]">3</div>
<div class="absolute left-[953px] top-[580px] flex size-[82px] items-center justify-center rounded-[18px] bg-linear-to-b from-[#b8cddd] via-[#7698bd] via-30% to-[#5d7893] pb-[2px] font-['Inter',sans-serif] text-[57px] font-bold leading-none text-white shadow-[inset_0_0_3px_3px_#55759a99,0_1px_3px_#0003]"><span class="-ml-[3px]">4</span></div>

<!-- highlight frames -->
<svg class="pointer-events-none absolute inset-0 h-[970px] w-[1058px]" fill="#fe9188" fill-rule="evenodd">
  <path d="M26 53H118A10 10 0 0 1 128 63V111A10 10 0 0 1 118 121H26A10 10 0 0 1 16 111V63A10 10 0 0 1 26 53ZM36 73V101H108V73Z"/>
  <path d="M26 549H220A10 10 0 0 1 230 559V647A10 10 0 0 1 220 657H26A10 10 0 0 1 16 647V559A10 10 0 0 1 26 549ZM36 569V637H210V569Z"/>
  <path d="M274 505H728A10 10 0 0 1 738 515V623A10 10 0 0 1 728 633H274A10 10 0 0 1 264 623V515A10 10 0 0 1 274 505ZM284 525V613H718V525Z"/>
  <path d="M744 505H1018A10 10 0 0 1 1028 515V571A10 10 0 0 1 1018 581H744A10 10 0 0 1 734 571V515A10 10 0 0 1 744 505ZM754 525V561H1008V525Z"/>
</svg>
</body>
</html>
